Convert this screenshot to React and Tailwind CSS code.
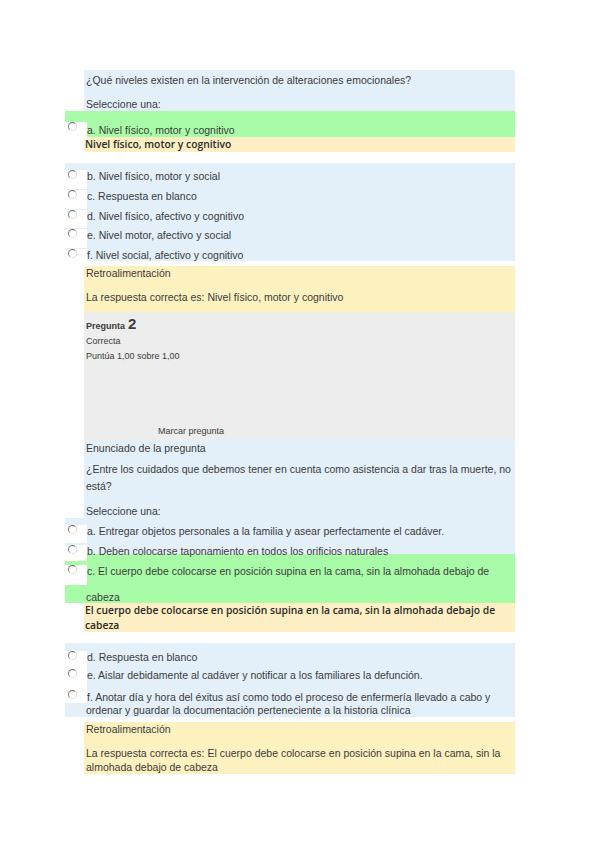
import React from 'react'

const BLUE = 'bg-[#e3eff9]'

function Radio({ top = 6, h = 19 }) {
  return (
    <div className="w-[22px] shrink-0 bg-white" style={{ height: h }}>
      <div
        className="ml-[3px] h-[9px] w-[9px] rounded-full border border-t-[#6f6f6f] border-l-[#7f7f7f] border-r-[#d8d8d8] border-b-[#e2e2e2] bg-white"
        style={{ marginTop: top }}
      />
    </div>
  )
}

function Option({ h, textTop, circleTop, squareTop = 0, squareH, green, children }) {
  return (
    <div className={'flex ' + (green ? 'bg-[#a9fca7]' : BLUE)} style={{ height: h }}>
      <div style={{ paddingTop: squareTop }}>
        <Radio top={circleTop - squareTop} h={squareH ?? h - 1 - squareTop} />
      </div>
      <div className="leading-[14px]" style={{ paddingTop: textTop - 7 }}>
        {children}
      </div>
    </div>
  )
}

function Correct({ children, className = '' }) {
  return (
    <div
      className={'ml-[19px] bg-[#fdefc3] pl-[1px] font-["Open_Sans",sans-serif] text-[10.3px] font-semibold leading-[15px] text-[#2a2a2a] ' + className}
    >
      {children}
    </div>
  )
}

function Feedback({ lines, className = '' }) {
  return (
    <div className={'ml-[19px] bg-[#fef1c0] pl-[2px] ' + className}>
      <div className="leading-[14px]">Retroalimentación</div>
      <div className="mt-[10px] leading-[14px]">
        {lines.map((l, i) => (
          <div key={i} className="whitespace-nowrap">{l}</div>
        ))}
      </div>
    </div>
  )
}

export default function App() {
  return (
    <div className="min-h-[848px] bg-white pt-[70px] font-['Liberation_Sans',Arial,sans-serif] text-[10.5px] text-[#3b3b3b]">
      <div className="ml-[65px] w-[450px]">
        {/* pregunta 1 */}
        <div className={'ml-[19px] h-[41px] pl-[2px] pt-[3px] ' + BLUE}>
          <div className="leading-[14px]">¿Qué niveles existen en la intervención de alteraciones emocionales?</div>
          <div className="mt-[10px] leading-[14px]">Seleccione una:</div>
        </div>

        <Option h={26} green textTop={19} circleTop={11} squareTop={5} squareH={21}>
          a. Nivel físico, motor y cognitivo
        </Option>
        <Correct className="h-[15px]">Nivel físico, motor y cognitivo</Correct>

        <div className="mt-[11px]">
          <Option h={20} textTop={13} circleTop={7}>b. Nivel físico, motor y social</Option>
          <Option h={19.5} textTop={13} circleTop={7}>c. Respuesta en blanco</Option>
          <Option h={19.5} textTop={13} circleTop={7}>d. Nivel físico, afectivo y cognitivo</Option>
          <Option h={19.5} textTop={13} circleTop={7}>e. Nivel motor, afectivo y social</Option>
          <Option h={19.5} textTop={13} circleTop={7}>f. Nivel social, afectivo y cognitivo</Option>
        </div>

        <Feedback className="mt-[5px] pb-[8px]" lines={['La respuesta correcta es: Nivel físico, motor y cognitivo']} />

        {/* pregunta 2 */}
        <div className="ml-[19px] h-[128px] bg-[#ededed] pl-[2px] pt-[3px] text-[9px] leading-[15px]">
          <div className="flex items-baseline gap-[3px] font-bold">
            <span>Pregunta</span>
            <span className="text-[15px] leading-[18px]">2</span>
          </div>
          <div>Correcta</div>
          <div>Puntúa 1,00 sobre 1,00</div>
          <div className="mt-[60px] pl-[72px]">Marcar pregunta</div>
        </div>

        <div className={'ml-[19px] h-[78px] pl-[2px] pt-[1px] ' + BLUE}>
          <div className="leading-[14px]">Enunciado de la pregunta</div>
          <div className="mt-[6px] leading-[17px]">
            <div className="whitespace-nowrap">
              ¿Entre los cuidados que debemos tener en cuenta como asistencia a dar tras la muerte, no
            </div>
            <div>está?</div>
          </div>
          <div className="mt-[9px] leading-[14px]">Seleccione una:</div>
        </div>

        <Option h={19} textTop={13} circleTop={7}>
          a. Entregar objetos personales a la familia y asear perfectamente el cadáver.
        </Option>
        <Option h={17} textTop={14} circleTop={8}>
          b. Deben colocarse taponamiento en todos los orificios naturales
        </Option>
        <Option h={49} green textTop={17} circleTop={11} squareTop={3} squareH={20}>
          <div className="whitespace-nowrap">
            c. El cuerpo debe colocarse en posición supina en la cama, sin la almohada debajo de
          </div>
          <div className="-ml-[1px] mt-[12px]">cabeza</div>
        </Option>
        <Correct className="h-[29px]">
          <div className="whitespace-nowrap">
            El cuerpo debe colocarse en posición supina en la cama, sin la almohada debajo de
          </div>
          <div>cabeza</div>
        </Correct>

        <div className="mt-[11px]">
          <Option h={19} textTop={14} circleTop={8}>d. Respuesta en blanco</Option>
          <Option h={21} textTop={13} circleTop={7}>
            e. Aislar debidamente al cadáver y notificar a los familiares la defunción.
          </Option>
          <div className={'flex h-[34px] ' + BLUE}>
            <Radio top={7} h={20} />
            <div className="pt-[7px] leading-[14px]">
              <div className="whitespace-nowrap">
                f. Anotar día y hora del éxitus así como todo el proceso de enfermería llevado a cabo y
              </div>
            </div>
          </div>
          <div className={'-mt-[14px] h-[14px] pl-[21px] leading-[14px] ' + BLUE}>
            ordenar y guardar la documentación perteneciente a la historia clínica
          </div>
        </div>

        <Feedback
          className="mt-[5px]"
          lines={[
            'La respuesta correcta es: El cuerpo debe colocarse en posición supina en la cama, sin la',
            'almohada debajo de cabeza',
          ]}
        />
      </div>
    </div>
  )
}
